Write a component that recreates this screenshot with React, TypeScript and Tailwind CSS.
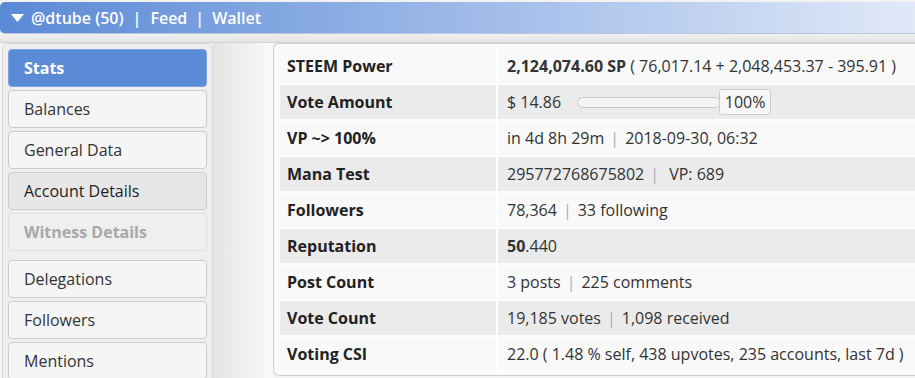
import React from "react";

type Row = { label: string; value: React.ReactNode };

const Sep = () => <span className="mx-[6px] text-[#aab]">|</span>;

const rows: Row[] = [
  {
    label: "STEEM Power",
    value: (
      <span>
        <span className="font-bold">2,124,074.60 SP</span> ( 76,017.14 + 2,048,453.37 - 395.91 )
      </span>
    ),
  },
  {
    label: "Vote Amount",
    value: (
      <div className="flex items-center">
        <span>$ 14.86</span>
        <div className="ml-[16px] h-[11px] w-[144px] rounded-full border border-[#c8c8c8] bg-[#f4f4f4]" />
        <div className="-ml-[2px] flex h-[26px] w-[52px] items-center justify-center rounded-[3px] border border-[#cccccc] bg-[#f7f7f7]">
          100%
        </div>
      </div>
    ),
  },
  {
    label: "VP ~> 100%",
    value: (
      <span>
        in 4d 8h 29m<Sep />2018-09-30, 06:32
      </span>
    ),
  },
  {
    label: "Mana Test",
    value: (
      <span>
        295772768675802<Sep /> VP: 689
      </span>
    ),
  },
  {
    label: "Followers",
    value: (
      <span>
        78,364<Sep />33 following
      </span>
    ),
  },
  {
    label: "Reputation",
    value: (
      <span>
        <span className="font-bold">50</span>.440
      </span>
    ),
  },
  {
    label: "Post Count",
    value: (
      <span>
        3 posts<Sep />225 comments
      </span>
    ),
  },
  {
    label: "Vote Count",
    value: (
      <span>
        19,185 votes<Sep />1,098 received
      </span>
    ),
  },
  {
    label: "Voting CSI",
    value: <span>22.0 ( 1.48 % self, 438 upvotes, 235 accounts, last 7d )</span>,
  },
];

const menu = [
  { name: "Stats", kind: "active" },
  { name: "Balances", kind: "normal" },
  { name: "General Data", kind: "normal" },
  { name: "Account Details", kind: "hover" },
  { name: "Witness Details", kind: "disabled" },
  { name: "Delegations", kind: "normal", gap: true },
  { name: "Followers", kind: "normal" },
  { name: "Mentions", kind: "normal" },
];

export default function App() {
  return (
    <div
      className="h-[378px] w-[915px] overflow-hidden bg-[#f3f3f3] pt-[2px] text-[#333333]"
      style={{ fontFamily: '"Open Sans", "Liberation Sans", sans-serif' }}
    >
      <div className="flex h-[32px] items-center rounded-l-[5px] border-b border-[#b9c6dc] bg-gradient-to-r from-[#5a89d5] to-[#e1e9f8] pl-[10px] text-[16px] font-semibold text-white">
        <svg width="15" height="10" viewBox="0 0 15 10" className="mr-[6px]">
          <path d="M1 1 L14 1 L7.5 9 Z" fill="#ffffff" />
        </svg>
        <span>@dtube (50)</span>
        <span className="mx-[9px]">|</span>
        <span>Feed</span>
        <span className="mx-[8px]">|</span>
        <span>Wallet</span>
      </div>
      <div className="h-[9px] border-b border-[#d2d2d2] bg-gradient-to-b from-[#f0f0f0] to-[#e4e4e4]" />
      <div className="flex">
        <div className="ml-[2px] w-[211px] shrink-0 rounded-[6px] border border-[#d6d6d6] bg-[#eeeeee] px-[5px] pt-[5px] pb-2">
          {menu.map((m) => {
            let cls = "border-[#cccccc] bg-[#f5f5f5] text-[#333333]";
            if (m.kind === "active") cls = "border-[#7ea2dd] bg-[#5b8bd6] text-white font-bold";
            if (m.kind === "hover") cls = "border-[#cccccc] bg-[#e7e7e7] text-[#222222]";
            if (m.kind === "disabled") cls = "border-[#e0e0e0] bg-[#efefef] text-[#a8a8a8] font-bold";
            return (
              <div
                key={m.name}
                className={`mb-[3px] flex h-[38px] items-center rounded-[4px] border pl-[15px] text-[16px] ${cls} ${m.gap ? "mt-[9px]" : ""}`}
              >
                {m.name}
              </div>
            );
          })}
        </div>
        <div className="w-[60px] shrink-0 bg-gradient-to-r from-[#e4e4e4] to-[#fafafa]" />
        <div className="h-[333px] flex-1 rounded-l-[6px] border border-r-0 border-[#d0d0d0] bg-[#fafafa] pl-[6px] pt-[5px]">
          {rows.map((r, i) => (
            <div
              key={r.label}
              className={`flex h-[36px] border-b-2 border-white text-[16px] ${i % 2 === 0 ? "bg-[#f9f9f9]" : "bg-[#ebebeb]"}`}
            >
              <div className="flex w-[218px] shrink-0 items-center border-r-2 border-white pl-[7px] font-bold text-[#222222]">
                {r.label}
              </div>
              <div className="flex items-center whitespace-nowrap pl-[9px]">{r.value}</div>
            </div>
          ))}
        </div>
      </div>
    </div>
  );
}
